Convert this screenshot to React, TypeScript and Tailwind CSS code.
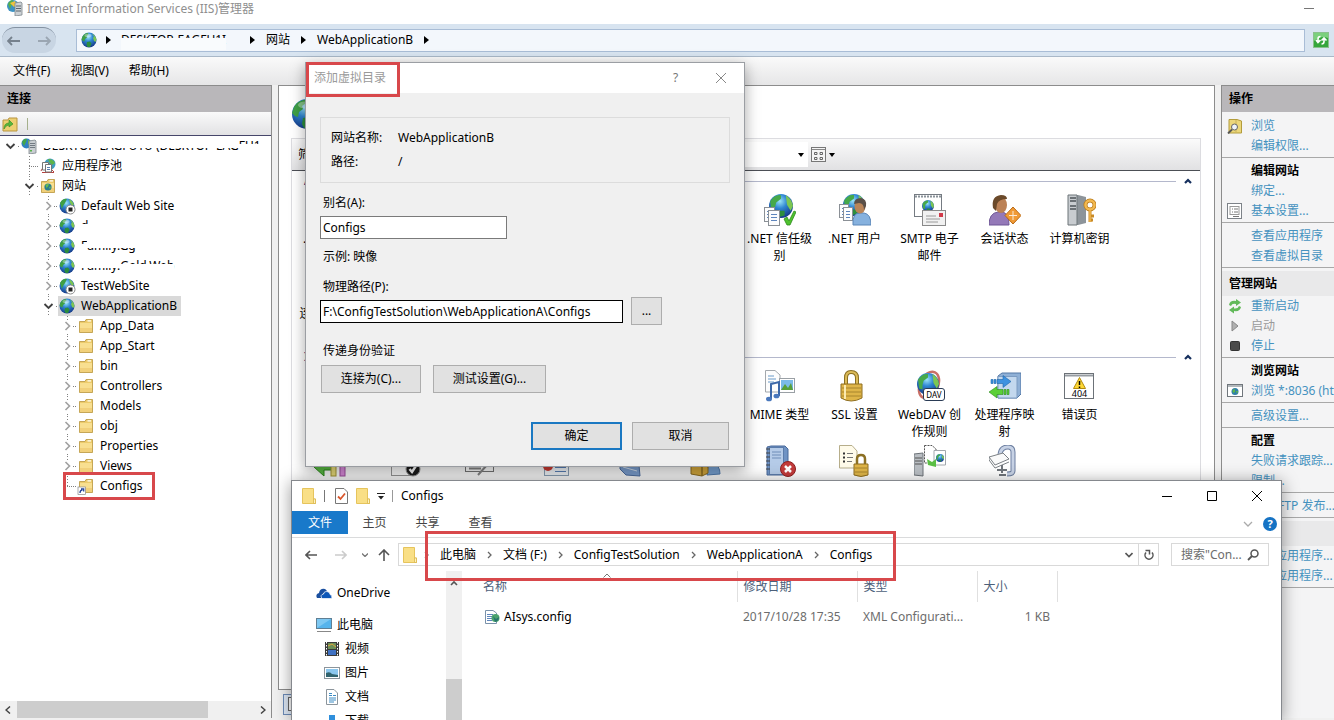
import React from "react";

type P = { className?: string };

/* ---------- small drawings ---------- */

function Globe({ className = "size-4" }: P) {
  return (
    <svg viewBox="0 0 32 32" className={"shrink-0 " + className} aria-hidden="true">
      <defs>
        <radialGradient id="sea" cx="0.45" cy="0.3" r="0.75">
          <stop offset="0" stopColor="#9be4f7" />
          <stop offset="0.4" stopColor="#2f86d2" />
          <stop offset="1" stopColor="#12307f" />
        </radialGradient>
      </defs>
      <circle cx="16" cy="16" r="15" fill="url(#sea)" />
      <path d="M3 9 C6 4 10 2 14 2 L15 5 L11 8 L12 11 L8 14 L7 19 L4 18 L1 15Z" fill="#3f9f45" />
      <path d="M22 3 C27 6 30 10 31 15 L29 20 L26 18 L24 12 L26 9Z" fill="#7cc653" />
      <path d="M12 20 L18 19 L21 23 L18 30 L13 30 L11 26Z" fill="#2c8e3c" />
      <ellipse cx="14" cy="7" rx="7" ry="3.5" fill="#fff" opacity="0.35" />
    </svg>
  );
}

function StoppedGlobe() {
  return (
    <svg viewBox="0 0 16 16" className="size-4 shrink-0 overflow-visible" aria-hidden="true">
      <circle cx="8" cy="8" r="7.5" fill="url(#sea)" />
      <path d="M1 5 Q4 0 8 1 L6 5 L4 8 L3 11Z" fill="#3f9f45" />
      <path d="M10 1 Q14 3 15 7 L13 8 L11 5Z" fill="#7cc653" />
      <circle cx="11.5" cy="11.5" r="4.5" fill="#fff" stroke="#888" />
      <rect x="9.5" y="9.5" width="4" height="4" fill="#222" />
    </svg>
  );
}

function ServerGlobe() {
  return (
    <svg viewBox="0 0 16 16" className="size-4 shrink-0" aria-hidden="true">
      <circle cx="5.5" cy="5.5" r="5" fill="#2f80c4" />
      <path d="M1 4 Q3 0 6 1 L5 4 L3 8Z" fill="#45a648" />
      <path d="M7 2 L10 4 L9 7 L7 6Z" fill="#6cbf3e" />
      <path d="M8 3 L14 2 L15 3 V15 L8 16Z" fill="#c9ced2" stroke="#7d868c" strokeWidth="0.8" />
      <path d="M9 5.500H14 M9 7.500H14 M9 9.500H14" stroke="#5c666e" strokeWidth="0.8" />
      <rect x="9" y="12" width="2" height="1.500" fill="#59b34a" />
    </svg>
  );
}

function AppPool() {
  return (
    <svg viewBox="0 0 16 16" className="size-4 shrink-0" aria-hidden="true">
      <circle cx="10" cy="6" r="5.5" fill="#3f9dc0" />
      <path d="M8 1 Q13 1 15 5 L12 7 L9 4Z" fill="#5fb548" />
      <path d="M1 13 Q2 9 5 10 M2 14.500H14 M14 14 L11 11" stroke="#b5423f" fill="none" />
      <path d="M2.500 4.500H8.500V12H2.500Z" fill="#fff" stroke="#777" />
      <path d="M5.500 6.500H11.500V14H5.500Z" fill="#fff" stroke="#777" />
      <path d="M7 9.500H10 M7 11.500H10" stroke="#5c7fb0" />
    </svg>
  );
}

function Folder({ globe, link }: { globe?: boolean; link?: boolean }) {
  return (
    <svg viewBox="0 0 16 16" className="size-4 shrink-0 overflow-visible" aria-hidden="true">
      <path d="M1.500 3.500H7L8 1.500H14.500V14.500H1.500Z" fill="#eccb6b" stroke="#b9953e" strokeWidth="0.8" />
      <path d="M2 5H14V14H2Z" fill="#f8df90" />
      <path d="M2 10H14V14H2Z" fill="#f1d07a" />
      <rect x="9.500" y="2.300" width="3.500" height="1.200" fill="#fff" />
      {globe && (
        <g>
          <circle cx="8" cy="9" r="3.600" fill="#2c7d8f" />
          <path d="M5.500 7 Q7 5.500 9 6 L8 8.500 L6.500 10Z M9 9 L11 8.500 L10 11.500Z" fill="#69bd4a" />
        </g>
      )}
      {link && (
        <g>
          <rect x="0" y="9" width="7.500" height="7.500" fill="#fff" stroke="#888" strokeWidth="0.7" />
          <path d="M2 15 Q2 12 4.500 12 M3 10.800H5.700V13.500" fill="none" stroke="#26459b" strokeWidth="1.300" />
        </g>
      )}
    </svg>
  );
}

function PlainFolder() {
  return (
    <svg viewBox="0 0 14 16" className="h-4 w-[14px] shrink-0" aria-hidden="true">
      <path d="M0.500 0.500H11.500V11L13.500 11V15.500H0.500Z" fill="#f9df86" stroke="#e6c45c" />
      <path d="M11.500 11 H13.500 V15.500 H11.500Z" fill="#fff2c0" stroke="#d9b64c" strokeWidth="0.8" />
    </svg>
  );
}

function Branch({ state }: { state: "open" | "closed" | "mid" | "last" | "root" }) {
  return (
    <svg viewBox="0 0 20 20" className="h-5 w-5 shrink-0" aria-hidden="true" fill="none">
      {state !== "root" && (
        <path d={state === "last" ? "M10.500 0V10" : "M10.500 0V20"} stroke="#808080" strokeDasharray="1 2" />
      )}
      <path d="M10 10.500H20" stroke="#808080" strokeDasharray="1 1" />
      {(state === "open" || state === "root") && (
        <g>
          <rect x="4" y="5" width="13" height="10" fill="#fff" />
          <path d="M6.500 8L10.500 12L14.500 8" stroke="#404040" strokeWidth="1.800" />
        </g>
      )}
      {state === "closed" && (
        <g>
          <rect x="6" y="4" width="9" height="13" fill="#fff" />
          <path d="M8.500 6L12.500 10L8.500 14" stroke="#a0a0a0" strokeWidth="1.600" />
        </g>
      )}
    </svg>
  );
}

/* 32px feature drawings */

const Big = ({ children }: { children: React.ReactNode }) => (
  <svg viewBox="0 0 32 32" className="size-8 shrink-0" aria-hidden="true">
    {children}
  </svg>
);

const MiniGlobe = ({ x, y, r }: { x: number; y: number; r: number }) => (
  <g transform={`translate(${x} ${y}) scale(${r / 10})`}>
    <circle r="10" fill="url(#sea)" />
    <path d="M-9 -4 Q-5 -10 0 -9 L0 -6 L-4 -3 L-5 1 L-5 5 L-8 4Z" fill="#46a94a" />
    <path d="M4 -9 Q9 -6 10 0 L8 4 L5 -1Z" fill="#7cc653" />
    <path d="M-2 4 L3 4 L3 8 L-1 9Z" fill="#2c8e3c" />
  </g>
);

const Sheet = ({ x, y, w, h }: { x: number; y: number; w: number; h: number }) => (
  <g>
    <rect x={x + 0.5} y={y + 0.5} width={w} height={h} fill="#fdfdfd" stroke="#8b9096" />
    <path
      d={`M${x + 3} ${y + 4.5}h${w - 5} M${x + 3} ${y + 7.5}h${w - 5} M${x + 3} ${y + 10.5}h${w - 5}`}
      stroke="#5f86bd"
    />
  </g>
);

const TrustIcon = () => (
  <Big>
    <MiniGlobe x={17} y={12} r={12} />
    <Sheet x={0} y={13} w={10} h={14} />
    <Sheet x={4} y={16} w={11} h={15} />
    <path d="M20 25 L23 23 L25 27 L30 17 L32 18 L26 31 L23 31Z" fill="#4fc22f" stroke="#2c8a1b" strokeWidth="0.8" />
  </Big>
);
const UserIcon = () => (
  <Big>
    <MiniGlobe x={15} y={11} r={11} />
    <Sheet x={0} y={10} w={9} h={13} />
    <Sheet x={4} y={13} w={9} h={13} />
    <path d="M14 31 Q13 19 21 19 H25 Q32 20 32 31Z" fill="#86b1de" stroke="#5b86b8" />
    <ellipse cx="21" cy="12.500" rx="5.500" ry="7" fill="#b98559" />
    <path d="M15 10 Q15 4 22 4 Q28 5 27 12 L25 16 Q25 9 20 9Z" fill="#5a5048" />
  </Big>
);
const SmtpIcon = () => (
  <Big>
    <rect x="0.500" y="0.500" width="27" height="22" fill="#fff" stroke="#757b82" />
    <path d="M1 2.500H27" stroke="#8a9299" strokeWidth="2" strokeDasharray="2 1" />
    <MiniGlobe x={14} y={12} r={6} />
    <rect x="8.500" y="16.500" width="23" height="15" fill="#f1f1f1" stroke="#8a8a8a" />
    <path d="M12 22H22 M12 25H26 M12 28H24" stroke="#9a9a9a" />
    <rect x="25" y="19" width="4" height="4" fill="#d23a4a" />
  </Big>
);
const SessionIcon = () => (
  <Big>
    <path d="M0 31 Q0 19 9 18 H14 Q20 20 20 31Z" fill="#9479b8" stroke="#6f5796" />
    <ellipse cx="12" cy="11" rx="6" ry="8" fill="#bb8257" />
    <path d="M4 14 Q2 2 12 1 Q18 1 18 5 Q10 5 8 10 L7 17Z" fill="#6b4a2a" />
    <path d="M24 13 L32 21.500 L24 30 L16 21.500Z" fill="#f09a35" stroke="#b86a17" />
    <path d="M24 17V26 M20 21.500H28" stroke="#fff" opacity="0.8" />
  </Big>
);
const KeyIcon = () => (
  <Big>
    <path d="M4 1H14L22 3V29L14 31H4Z" fill="#8d949a" />
    <path d="M4 1H13V31H4Z" fill="#c8ccd0" stroke="#6d7479" />
    <path d="M6 4H12 M6 7H12 M6 12H12 M6 15H12" stroke="#4c5358" strokeWidth="1.500" />
    <circle cx="26" cy="11" r="4.500" fill="none" stroke="#b87b1c" strokeWidth="4" />
    <circle cx="26" cy="11" r="4.500" fill="none" stroke="#f3b950" strokeWidth="2.500" />
    <path d="M26 16V28 M26 22H30 M26 26H29" stroke="#c98a25" strokeWidth="3" />
    <path d="M26 16V28" stroke="#f3b950" strokeWidth="1.500" />
  </Big>
);
const MimeIcon = () => (
  <Big>
    <path d="M1.500 0.500H11L16 5V22H1.500Z" fill="#fdfdfd" stroke="#a3a8ad" />
    <path d="M4 6H10 M4 9H12 M4 12H10" stroke="#6a9bc9" />
    <rect x="15.500" y="8.500" width="15" height="14" fill="#fff" stroke="#9aa0a5" />
    <rect x="17" y="10" width="12" height="10" fill="#7bbbe8" />
    <path d="M17 20L21 14L24 18L27 13L29 20Z" fill="#58a03a" />
    <path d="M7 29V14L15 12V26" fill="none" stroke="#3c67a8" strokeWidth="2" />
    <ellipse cx="5" cy="29" rx="3" ry="2.300" fill="#4a78bd" />
    <ellipse cx="12.500" cy="26" rx="3" ry="2.300" fill="#4a78bd" />
  </Big>
);
const LockIcon = () => (
  <Big>
    <path d="M7 15V8Q7 2 12 2Q18 2 18 8V15" fill="none" stroke="#8a6f22" strokeWidth="4" />
    <path d="M7 15V8Q7 2 12 2Q18 2 18 8V15" fill="none" stroke="#dcbb58" strokeWidth="2" />
    <path d="M2 14H23V28Q12 34 2 28Z" fill="#dfb548" stroke="#8f6f21" />
    <path d="M3 18H22 M3 22H22 M3 26H22" stroke="#a8852d" />
    <path d="M6 15V29" stroke="#fbeab0" strokeWidth="2" />
  </Big>
);
const DavIcon = () => (
  <Big>
    <ellipse cx="15" cy="15" rx="9" ry="14" fill="none" stroke="#c96f66" strokeWidth="2.500" transform="rotate(25 15 15)" />
    <MiniGlobe x={14} y={14} r={11} />
    <rect x="9.500" y="18.500" width="21" height="12" rx="2.500" fill="#fff" stroke="#2a3b55" />
    <text x="20" y="28" fontSize="8" textAnchor="middle" fill="#000" className="font-[Noto_Sans,sans-serif]">
      DAV
    </text>
  </Big>
);
const HandlerIcon = () => (
  <Big>
    <path d="M9 6L13 3H32V24L28 28H9Z" fill="#8fb0d6" stroke="#5579a6" />
    <path d="M9 6.500H28V28H9Z" fill="#c3d8ee" stroke="#7c9cc2" />
    <path d="M8 9.500H14V5.500L22 11.500L14 17.500V13.500H8Z M5 9.500H7V13.500H5Z M2 9.500H4V13.500H2Z" fill="#3d92e0" stroke="#2064a8" strokeWidth="0.600" />
    <path d="M14 19.500H8V16.500L0 22L8 28V24.500H14Z M15 19.500H17V24.500H15Z M18 19.500H20V24.500H18Z" fill="#5bcf38" stroke="#2c8a1b" strokeWidth="0.600" />
  </Big>
);
const ErrorIcon = () => (
  <Big>
    <rect x="0.500" y="3.500" width="29" height="25" fill="#fff" stroke="#6c7278" />
    <path d="M1 5.500H29" stroke="#969ca2" strokeWidth="2" />
    <path d="M15.500 7.500L21.500 18.500H9.500Z" fill="#ffd834" stroke="#b08a10" />
    <path d="M15.500 11V15 M15.500 16.500V18" stroke="#000" strokeWidth="1.500" />
    <text x="15.500" y="27" fontSize="9" textAnchor="middle" className="font-[Noto_Sans,sans-serif]">
      404
    </text>
  </Big>
);
const LogIcon = () => (
  <Big>
    <path d="M3 2L7 1H21L24 4V30H3Z" fill="#6f93c4" stroke="#49699a" />
    <rect x="5.500" y="2.500" width="14" height="27" fill="#b5cbe8" stroke="#5b7cab" />
    <path d="M8 7H17 M8 10H17 M8 13H17" stroke="#6e8db8" />
    <path d="M2 4H6 M2 8H6 M2 12H6 M2 16H6 M2 20H6 M2 24H6" stroke="#444" />
    <circle cx="24" cy="24" r="7.500" fill="#c33b3b" stroke="#8e1f1f" />
    <path d="M21 21L27 27 M27 21L21 27" stroke="#fff" strokeWidth="2.500" />
  </Big>
);
const RestrictIcon = () => (
  <Big>
    <path d="M0.500 0.500H13L18 6V23H0.500Z" fill="#fffbea" stroke="#b7ae8b" />
    <path d="M4 8.500H6 M4 12.500H6 M4 16.500H6" stroke="#333" strokeWidth="2" />
    <path d="M8 8.500H14 M8 12.500H14 M8 16.500H13" stroke="#777" />
    <path d="M18 20V14Q18 10 22 10Q26 10 26 14V20" fill="none" stroke="#8c7024" strokeWidth="2.500" />
    <path d="M15 19H29V30Q22 33 15 30Z" fill="#dfb548" stroke="#8f6f21" />
    <path d="M16 23H28 M16 27H28" stroke="#a8852d" />
  </Big>
);
const OutputIcon = () => (
  <Big>
    <path d="M0 9L9 8V31L0 30Z" fill="#b9bec3" stroke="#6c7278" />
    <path d="M1 13H8 M1 16H8 M1 19H8" stroke="#555" />
    <path d="M10.500 0.500H18L22 4V18H10.500Z" fill="#fff" stroke="#555" strokeDasharray="2 1" />
    <path d="M20 5.500H31.500V20H20Z" fill="#fff" stroke="#a3a8ad" />
    <MiniGlobe x={26} y={13} r={4} />
    <path d="M13 14L18 17L22 14V22L14 20Z" fill="#5bbf45" />
  </Big>
);
const ClampIcon = () => (
  <Big>
    <path d="M11 9Q12 2 19 2Q24 2 24 7V26Q24 29 18 29" fill="none" stroke="#6d7fa0" strokeWidth="5" />
    <path d="M11 9Q12 2 19 2Q24 2 24 7V26Q24 29 18 29" fill="none" stroke="#c7d2e5" strokeWidth="3" />
    <path d="M0 12L14 8L20 14L6 20Z" fill="#fafafa" stroke="#7b8085" />
    <path d="M0 15L6 23L20 17 M0 12V16" fill="none" stroke="#7b8085" />
    <path d="M13 20V28 M8 25H18 M10 30H17" stroke="#70757b" strokeWidth="2" />
  </Big>
);
const ArrowBarsIcon = () => (
  <Big>
    <path d="M0 22L10 13V19H18V25H10V31Z" fill="#5bbf45" stroke="#2c8a1b" />
    <rect x="17" y="10" width="5" height="21" fill="#ecdf7c" stroke="#a79a35" />
    <rect x="26" y="10" width="5" height="21" fill="#dd8ede" stroke="#a04fa1" />
  </Big>
);
const AuthIcon = () => (
  <Big>
    <rect x="2.500" y="8.500" width="21" height="22" fill="#fff" stroke="#999" />
    <circle cx="24" cy="24" r="7" fill="#1b1b1b" stroke="#999" />
    <path d="M20.500 24L23 27L27.500 20" fill="none" stroke="#fff" strokeWidth="2.500" />
  </Big>
);
const BrowseIcon = () => (
  <Big>
    <rect x="1.500" y="12.500" width="28" height="14" fill="#fff" stroke="#777" />
    <path d="M5 23.500H17 M14 30L23 20" stroke="#888" strokeWidth="2" />
  </Big>
);
const DocIcon = () => (
  <Big>
    <rect x="5.500" y="6.500" width="24" height="24" fill="#f7fbff" stroke="#8fa4ba" />
    <circle cx="9" cy="21" r="5" fill="#cf3b33" />
    <path d="M16 22.500H27 M16 26.500H27" stroke="#5a83bb" />
  </Big>
);
const BookIcon = () => (
  <Big>
    <path d="M6 8L24 9L26 31L12 30L6 24Z" fill="#7fa3d4" stroke="#4d6fa3" />
    <path d="M9 22L23 26" stroke="#d7e4f4" />
  </Big>
);
const GroupIcon = () => (
  <Big>
    <path d="M18 30Q17 20 24 19Q31 20 31 29Z" fill="#7ba6d8" stroke="#527eb2" />
    <path d="M2 18L13 20V31L2 29Z M13 20L19 22V28L13 31Z" fill="#d9ac3e" stroke="#8f6f21" />
  </Big>
);

/* ---------- shared pieces ---------- */

function Feature({ icon, label, place = "" }: { icon: React.ReactNode; label: string; place?: string }) {
  return (
    <div className={"flex h-[75px] flex-col items-center gap-1 text-center leading-[17px] " + place}>
      {icon}
      <span className="w-[68px]">{label}</span>
    </div>
  );
}

/* Text of which a painted-over strip hides the upper or the lower part. */
function Masked({ text, show, tone = "bg-white" }: { text: string; show: "top" | "bottom"; tone?: string }) {
  return (
    <span className="relative leading-5 whitespace-pre">
      {text}
      <span className={"absolute inset-x-0 " + tone + (show === "top" ? " top-2 bottom-0" : " top-0 h-3")} />
    </span>
  );
}

const indents = ["pl-0", "pl-[19px]", "pl-[38px]", "pl-[57px]"];

function Node(p: {
  level: number;
  state: "open" | "closed" | "mid" | "last" | "root";
  icon: React.ReactNode;
  label: React.ReactNode;
  selected?: boolean;
  marked?: boolean;
}) {
  return (
    <li className={"relative flex h-5 items-center " + indents[p.level]}>
      <Branch state={p.state} />
      <span
        className={
          "flex h-5 items-center gap-[6px] pr-1 pl-px whitespace-nowrap " + (p.selected ? "bg-[#d9d9d9]" : "")
        }
      >
        {p.icon}
        <span className="flex">{p.label}</span>
      </span>
      {p.marked && <span className="absolute -top-1 left-[63px] h-7 w-[92px] border-3 border-[#d8484b]" />}
    </li>
  );
}

const Caret = () => (
  <svg viewBox="0 0 5 8" className="h-2 w-[5px] shrink-0" aria-hidden="true">
    <path d="M0 0L5 4L0 8Z" fill="#000" />
  </svg>
);
const Down = () => (
  <svg viewBox="0 0 6 4" className="h-1 w-[6px] shrink-0" aria-hidden="true">
    <path d="M0 0H6L3 4Z" fill="#000" />
  </svg>
);
const Crumb = () => (
  <svg viewBox="0 0 5 8" className="h-2 w-[5px] shrink-0" fill="none" aria-hidden="true">
    <path d="M1 1L4 4L1 7" stroke="#666" strokeWidth="1.300" />
  </svg>
);

function GroupHead({ label }: { label: string }) {
  return (
    <div className="flex h-[18px] items-center gap-2 pr-2 pl-3">
      <span className="font-bold text-[#1e3287]">{label}</span>
      <span className="h-px flex-1 bg-[#b4b8cc]" />
      <svg viewBox="0 0 8 6" className="h-[6px] w-2" fill="none" aria-hidden="true">
        <path d="M1 5L4 2L7 5" stroke="#16305e" strokeWidth="2.200" />
      </svg>
    </div>
  );
}

function Action({ icon, label, off }: { icon?: React.ReactNode; label: string; off?: boolean }) {
  return (
    <li className="flex h-5 items-center pl-[5px] whitespace-nowrap">
      <span className="flex w-6 shrink-0">{icon}</span>
      {off ? <span className="text-[#9a9a9a]">{label}</span> : <a href="#" className="text-[#4592bf]">{label}</a>}
    </li>
  );
}
const ActionHead = ({ label }: { label: string }) => (
  <li className="flex h-5 items-center pl-[29px] font-bold whitespace-nowrap">{label}</li>
);
const Rule = () => (
  <li className="flex h-[5px] items-start pt-px" aria-hidden="true">
    <span className="h-px w-full bg-[#a8a8a8]" />
  </li>
);
const Band = ({ label }: { label: string }) => (
  <li className="flex h-[25px] items-center bg-[#e9e9ea] pl-[7px] font-bold">{label}</li>
);

const dlgBtn = "flex h-7 items-center justify-center border border-[#adadad] bg-[#e1e1e1]";

/* ---------- the windows ---------- */

function Dialog() {
  return (
    <section
      role="dialog"
      aria-label="添加虚拟目录"
      className="absolute top-[62px] left-[305px] w-[440px] border border-[#9b9ea3] bg-[#f0f0f0] shadow-[0_4px_14px_rgba(0,0,0,0.35)]"
    >
      <header className="flex h-[30px] items-center bg-white pr-px pl-2">
        <span className="flex-1 text-[#9a9a9a]">添加虚拟目录</span>
        <button aria-label="帮助" className="flex w-[45px] justify-center text-[#777]">?</button>
        <button aria-label="关闭" className="flex w-[45px] justify-center">
          <svg viewBox="0 0 10 10" className="size-[10px]" aria-hidden="true">
            <path d="M0 0L10 10M10 0L0 10" stroke="#888" />
          </svg>
        </button>
      </header>
      <span className="absolute top-[-1px] left-0 h-[35px] w-[94px] border-3 border-[#d8484b]" />
      <form className="flex flex-col px-[14px] pt-6 pb-4" onSubmit={(e) => e.preventDefault()}>
        <dl className="grid h-[66px] grid-cols-[67px_1fr] content-center gap-y-1 border border-[#dcdcdc] pl-[10px] leading-5">
          <dt>网站名称:</dt>
          <dd>WebApplicationB</dd>
          <dt>路径:</dt>
          <dd>/</dd>
        </dl>
        <label htmlFor="alias" className="mt-[10px] pl-[3px] leading-5">别名(A):</label>
        <input
          id="alias"
          defaultValue="Configs"
          className="mt-[3px] h-[23px] w-[187px] border border-[#7a7a7a] bg-white px-[2px] outline-none"
        />
        <p className="mt-2 pl-[3px] leading-5">示例: 映像</p>
        <label htmlFor="path" className="mt-[10px] pl-[3px] leading-5">物理路径(P):</label>
        <div className="flex items-center gap-2">
          <input
            id="path"
            defaultValue="F:\ConfigTestSolution\WebApplicationA\Configs"
            className="h-[23px] w-[303px] border border-black bg-white px-[2px] outline-none"
          />
          <button type="button" className={dlgBtn + " w-[31px]"}>...</button>
        </div>
        <p className="mt-4 pl-[3px] leading-5">传递身份验证</p>
        <div className="mt-1 flex gap-3 pl-px">
          <button type="button" className={dlgBtn + " w-[100px]"}>连接为(C)...</button>
          <button type="button" className={dlgBtn + " w-[113px]"}>测试设置(G)...</button>
        </div>
        <div className="mt-[29px] flex justify-end gap-[10px] pr-px">
          <button className="flex h-7 w-[91px] items-center justify-center border-2 border-[#1a78c2] bg-[#e1e1e1]">确定</button>
          <button type="button" className={dlgBtn + " w-[97px]"}>取消</button>
        </div>
      </form>
    </section>
  );
}

function Explorer() {
  const tree = [
    {
      name: "视频",
      icon: (
        <>
          <rect x="1" y="1" width="14" height="14" fill="#3a3a3a" />
          <rect x="4" y="2" width="8" height="6" fill="#6c8f58" />
          <rect x="4" y="9" width="8" height="5" fill="#3f72c4" />
          <path d="M2.500 1V15M13.500 1V15" stroke="#fff" strokeDasharray="1.500 1.500" />
          <path d="M4 5L8 3L12 6" stroke="#e0a63c" fill="none" />
        </>
      ),
    },
    {
      name: "图片",
      icon: (
        <>
          <rect x="0.500" y="2.500" width="15" height="11" fill="#fff" stroke="#8c959c" />
          <rect x="2" y="4" width="12" height="8" fill="#8cc7ee" />
          <path d="M2 12V8Q6 6 8 9L14 10V12Z" fill="#32646f" />
        </>
      ),
    },
    {
      name: "文档",
      icon: (
        <>
          <path d="M2.500 0.500H10L13.500 4V15.500H2.500Z" fill="#fff" stroke="#8c959c" />
          <path d="M5 4.500H8M5 6.500H8M9 6.500H12M5 9H12M5 11H12M5 13H10" stroke="#3c8cc4" />
        </>
      ),
    },
    { name: "下载", icon: <path d="M5 2H11V9H14L8 15L2 9H5Z" fill="#2f8fdc" /> },
  ];
  return (
    <section
      aria-label="Configs"
      className="absolute top-[480px] right-[52px] bottom-0 left-[291px] flex flex-col overflow-hidden border border-b-0 border-[#85888d] bg-white shadow-[0_2px_16px_rgba(0,0,0,0.4)]"
    >
      <header className="flex h-[30px] shrink-0 items-center pr-[2px] pl-[10px]">
        <PlainFolder />
        <span className="mx-2 h-3 w-px bg-[#777]" />
        <svg viewBox="0 0 13 16" className="mr-2 ml-[2px] h-4 w-[13px]" aria-hidden="true">
          <path d="M0.500 0.500H9L12.500 4V15.500H0.500Z" fill="#fff" stroke="#777" />
          <path d="M3 8.500L5.500 11L10 5.500" fill="none" stroke="#d9562c" strokeWidth="1.800" />
        </svg>
        <PlainFolder />
        <svg viewBox="0 0 8 7" className="mx-[7px] h-[7px] w-2" aria-hidden="true">
          <path d="M0 0.500H8" stroke="#222" />
          <path d="M1 3H7L4 6.500Z" fill="#222" />
        </svg>
        <span className="mr-2 h-3 w-px bg-[#999]" />
        <h2 className="flex-1">Configs</h2>
        <button aria-label="最小化" className="flex w-[45px] justify-center">
          <svg viewBox="0 0 10 10" className="size-[10px]" aria-hidden="true"><path d="M0 5.500H10" stroke="#000" /></svg>
        </button>
        <button aria-label="最大化" className="flex w-[45px] justify-center">
          <svg viewBox="0 0 10 10" className="size-[10px]" aria-hidden="true"><path d="M0.500 0.500H9.500V9.500H0.500Z" fill="none" stroke="#000" /></svg>
        </button>
        <button aria-label="关闭" className="flex w-[45px] justify-center">
          <svg viewBox="0 0 10 10" className="size-[10px]" aria-hidden="true"><path d="M0 0L10 10M10 0L0 10" stroke="#000" /></svg>
        </button>
      </header>
      <nav className="flex h-[27px] shrink-0 items-start border-b border-[#dadbdc] pr-1 text-[#444]">
        <button className="h-[23px] w-14 bg-[#1979ca] text-white">文件</button>
        <button className="h-6 w-[53px]">主页</button>
        <button className="h-6 w-[53px]">共享</button>
        <button className="h-6 w-[53px]">查看</button>
        <span className="flex-1" />
        <span className="flex h-[26px] items-center gap-[10px]">
          <svg viewBox="0 0 10 6" className="h-[6px] w-[10px]" fill="none" aria-hidden="true">
            <path d="M1 1L5 5L9 1" stroke="#aaa" strokeWidth="1.300" />
          </svg>
          <button aria-label="帮助" className="flex size-[14px] items-center justify-center rounded-full bg-[#1673c4] text-[11px] font-bold text-white">?</button>
        </span>
      </nav>
      <div className="flex h-[33px] shrink-0 items-center pr-3">
        <div className="flex w-[106px] items-center justify-between pr-2 pl-[13px]">
          <button aria-label="后退">
            <svg viewBox="0 0 12 10" className="h-[10px] w-3" fill="none" aria-hidden="true"><path d="M12 5H1M5 1L1 5L5 9" stroke="#555" strokeWidth="1.600" /></svg>
          </button>
          <button aria-label="前进" className="ml-2">
            <svg viewBox="0 0 12 10" className="h-[10px] w-3" fill="none" aria-hidden="true"><path d="M0 5H11M7 1L11 5L7 9" stroke="#ccc" strokeWidth="1.600" /></svg>
          </button>
          <svg viewBox="0 0 6 4" className="ml-1 h-1 w-[6px]" fill="none" aria-hidden="true"><path d="M0 0.500L3 3.500L6 0.500" stroke="#777" strokeWidth="1.300" /></svg>
          <button aria-label="上移">
            <svg viewBox="0 0 12 12" className="size-3" fill="none" aria-hidden="true"><path d="M6 12V1M1 6L6 1L11 6" stroke="#555" strokeWidth="1.600" /></svg>
          </button>
        </div>
        <div className="flex h-[23px] flex-1 items-center border border-[#d9d9d9] pl-1 whitespace-nowrap">
          <PlainFolder />
          <span className="flex items-center gap-[11px] pl-[7px]">
            <Crumb />
            <span>此电脑</span>
            <Crumb />
            <span>文档 (F:)</span>
            <Crumb />
            <span>ConfigTestSolution</span>
            <Crumb />
            <span>WebApplicationA</span>
            <Crumb />
            <span>Configs</span>
          </span>
          <span className="flex-1" />
          <svg viewBox="0 0 8 6" className="mr-[5px] h-[6px] w-2" fill="none" aria-hidden="true"><path d="M0.500 1L4 4.500L7.500 1" stroke="#555" strokeWidth="1.600" /></svg>
          <button aria-label="刷新" className="flex h-[21px] w-5 items-center justify-center border-l border-[#d9d9d9]">
            <svg viewBox="0 0 12 12" className="size-3" fill="none" aria-hidden="true">
              <path d="M3 3.500A4 4 0 1 0 9 3.500" stroke="#555" strokeWidth="1.500" />
              <path d="M2.500 1.500H6.500V5.500" stroke="#555" strokeWidth="1.500" />
            </svg>
          </button>
        </div>
        <label className="ml-3 flex h-[23px] w-[98px] items-center border border-[#d9d9d9] pr-1">
          <input placeholder='搜索"Con...' aria-label="搜索" className="w-[75px] pl-[9px] outline-none placeholder:text-[#6d6d6d]" />
          <svg viewBox="0 0 12 12" className="size-3" fill="none" aria-hidden="true">
            <circle cx="7.500" cy="4.500" r="3.500" stroke="#555" strokeWidth="1.500" />
            <path d="M5 7L1 11" stroke="#555" strokeWidth="1.800" />
          </svg>
        </label>
      </div>
      <div className="flex min-h-0 flex-1">
        <ul className="w-[154px] shrink-0 overflow-hidden pt-[10px]">
          <li className="flex h-6 items-center gap-[5px] pl-6">
            <svg viewBox="0 0 16 16" className="size-4" aria-hidden="true">
              <path d="M1 13Q-1 9 3 8Q4 3 9 4Q11 5 11 7Q6 7 6 13Z" fill="#1a4f9f" />
              <path d="M6 13.500Q3.500 10 7.500 9Q8 6 11 6.500Q14 7 14 9.500Q16.500 10 15.800 13.500Z" fill="#0d57b8" stroke="#fff" strokeWidth="0.700" />
            </svg>
            OneDrive
          </li>
          <li className="mt-2 flex h-6 items-center gap-[5px] pl-6">
            <svg viewBox="0 0 16 16" className="size-4" aria-hidden="true">
              <rect x="0.500" y="1.500" width="15" height="10" fill="#56b4ec" stroke="#5f7f94" />
              <path d="M1 2H15L1 11Z" fill="#9ad6f7" opacity="0.600" />
              <path d="M1 14.500H15" stroke="#888" />
            </svg>
            此电脑
          </li>
          {tree.map((t) => (
            <li key={t.name} className="flex h-6 items-center gap-[5px] pl-8">
              <svg viewBox="0 0 16 16" className="size-4" fill="none" aria-hidden="true">{t.icon}</svg>
              {t.name}
            </li>
          ))}
        </ul>
        <div className="flex w-4 shrink-0 flex-col bg-[#f0f0f0]">
          <svg viewBox="0 0 16 16" className="mt-[2px] size-4" fill="none" aria-hidden="true"><path d="M5 12L8 9L11 12" stroke="#555" strokeWidth="1.600" /></svg>
          <span className="h-[90px]" />
          <span className="flex-1 bg-[#cdcdcd]" />
        </div>
        <div className="relative flex-1">
          <table className="ml-2 w-[587px] table-fixed border-collapse text-left">
            <thead>
              <tr className="h-[31px] text-[#4c607a]">
                <th className="w-[267px] border-r border-[#e0e0e0] pl-[13px] font-normal">名称</th>
                <th className="w-[120px] border-r border-[#e0e0e0] pl-[6px] font-normal">修改日期</th>
                <th className="w-[120px] border-r border-[#e0e0e0] pl-[6px] font-normal">类型</th>
                <th className="w-20 border-r border-[#e0e0e0] pl-[6px] font-normal">大小</th>
              </tr>
            </thead>
            <tbody>
              <tr className="h-[30px] text-[#6d6d6d]">
                <td className="pl-[13px] text-black">
                  <span className="flex items-center gap-1 pl-px">
                    <svg viewBox="0 0 16 16" className="size-4" aria-hidden="true">
                      <path d="M1.500 1.500H9L12.500 4V14.500H1.500Z" fill="#fff" stroke="#7a92ab" />
                      <path d="M3 5.500H9M3 7.500H9M3 9.500H8M3 11.500H8" stroke="#5f86bd" />
                      <circle cx="11.500" cy="9" r="4" fill="#4aa36d" />
                      <path d="M9 7L12 10L15 8Q15 12 11 13Z" fill="#27746e" />
                    </svg>
                    AIsys.config
                  </span>
                </td>
                <td className="pl-[6px] whitespace-nowrap">2017/10/28 17:35</td>
                <td className="pl-[6px] whitespace-nowrap">XML Configurati...</td>
                <td className="pr-[7px] text-right">1 KB</td>
              </tr>
            </tbody>
          </table>
          <svg viewBox="0 0 8 5" className="absolute top-[2px] left-[141px] h-[5px] w-2" fill="none" aria-hidden="true">
            <path d="M0.500 4.500L4 1L7.500 4.500" stroke="#777" />
          </svg>
        </div>
      </div>
      <span className="pointer-events-none absolute top-[50px] left-[133px] h-[50px] w-[471px] border-3 border-[#d8484b]" />
    </section>
  );
}

const folders = ["App_Data", "App_Start", "bin", "Controllers", "Models", "obj", "Properties", "Views"];

function Connections() {
  return (
    <aside className="flex w-[272px] shrink-0 flex-col border-t border-r border-[#8c8c8c] bg-white">
      <h2 className="flex h-[26px] shrink-0 items-center bg-[#b9b7ba] pl-[7px] font-bold">连接</h2>
      <div className="flex h-6 shrink-0 items-center gap-[9px] border-b border-[#46466a] bg-linear-to-b from-[#fafafa] to-[#e2e2e4] pl-[2px]">
        <svg viewBox="0 0 16 16" className="size-4" aria-hidden="true">
          <path d="M1 4H6L7 2H15V15H1Z" fill="#edcf72" stroke="#b9953e" />
          <path d="M2 13Q2 7 7 7V4L11 8L7 11V9Q4 9 2 13Z" fill="#57b83d" stroke="#2f8a24" strokeWidth="0.600" />
        </svg>
        <span className="h-3 w-px bg-[#a5b08c]" />
      </div>
      <ul className="min-h-0 flex-1 overflow-hidden">
        <Node
          level={0}
          state="root"
          icon={<ServerGlobe />}
          label={
            <>
              <Masked text="DESKTOP-EAGFU1U (DESKTOP-EAG" show="bottom" />
              <Masked text="FU1" show="top" />
            </>
          }
        />
        <Node level={1} state="mid" icon={<AppPool />} label="应用程序池" />
        <Node level={1} state="open" icon={<Folder globe />} label="网站" />
        <Node level={2} state="closed" icon={<StoppedGlobe />} label="Default Web Site" />
        <Node level={2} state="closed" icon={<Globe />} label={<Masked text="d" show="top" />} />
        <Node
          level={2}
          state="closed"
          icon={<Globe />}
          label={
            <>
              <Masked text="F" show="top" />
              <Masked text="amily.Gg" show="bottom" />
            </>
          }
        />
        <Node
          level={2}
          state="closed"
          icon={<Globe />}
          label={
            <>
              <Masked text="Family." show="bottom" />
              <Masked text="Gold.Web" show="top" />
            </>
          }
        />
        <Node level={2} state="closed" icon={<StoppedGlobe />} label="TestWebSite" />
        <Node level={2} state="open" icon={<Globe />} label="WebApplicationB" selected />
        {folders.map((f) => (
          <Node key={f} level={3} state="closed" icon={<Folder />} label={f} />
        ))}
        <Node level={3} state="last" icon={<Folder link />} label="Configs" marked />
      </ul>
      <div className="flex h-[17px] shrink-0 items-center bg-[#f0f0f0] px-[5px]">
        <svg viewBox="0 0 6 8" className="h-2 w-[6px]" fill="none" aria-hidden="true"><path d="M5 0.500L1 4L5 7.500" stroke="#444" strokeWidth="1.500" /></svg>
        <span className="ml-[6px] h-[17px] w-[191px] bg-[#cdcdcd]" />
        <span className="flex-1" />
        <svg viewBox="0 0 6 8" className="h-2 w-[6px]" fill="none" aria-hidden="true"><path d="M1 0.500L5 4L1 7.500" stroke="#444" strokeWidth="1.500" /></svg>
      </div>
    </aside>
  );
}

function FeaturePane() {
  return (
    <main className="flex min-w-0 flex-1 flex-col">
      <div className="flex min-h-0 flex-1 flex-col overflow-hidden border border-[#8c8c8c] bg-white pr-[13px] pl-3">
        <div className="flex h-[52px] shrink-0 items-center pt-1">
          <Globe className="size-8" />
        </div>
        <div className="flex min-h-0 flex-1 flex-col border border-b-0 border-[#dcdce0]">
          <div className="flex h-8 shrink-0 items-center border-b border-[#4c4f55] bg-linear-to-b from-[#fbfbfb] to-[#e1e1e3] pl-[6px]">
            <label htmlFor="filter" className="pr-2">筛选:</label>
            <input id="filter" className="h-[25px] w-[465px] bg-white outline-none" />
            <span className="flex h-[25px] w-[10px] items-center bg-white"><Down /></span>
            <button aria-label="视图" className="ml-[3px] flex items-center gap-[3px]">
              <svg viewBox="0 0 15 15" className="size-[15px]" fill="none" aria-hidden="true">
                <rect x="0.500" y="0.500" width="14" height="14" fill="#f4f4f4" stroke="#777" />
                <path d="M1 2.500H14" stroke="#888" />
                <path d="M3.500 5.500H6V7.500H3.500Z M9 5.500H11.500V7.500H9Z M3.500 10.500H6V12.500H3.500Z M9 10.500H11.500V12.500H9Z" stroke="#666" />
              </svg>
              <Down />
            </button>
          </div>
          <div className="h-px shrink-0" />
          <GroupHead label="ASP.NET" />
          <div className="grid shrink-0 grid-cols-[repeat(11,75px)] py-1">
            <Feature icon={<TrustIcon />} label=".NET 编译" />
            <Feature icon={<TrustIcon />} label=".NET 信任级别" place="col-start-7" />
            <Feature icon={<UserIcon />} label=".NET 用户" />
            <Feature icon={<SmtpIcon />} label="SMTP 电子邮件" />
            <Feature icon={<SessionIcon />} label="会话状态" />
            <Feature icon={<KeyIcon />} label="计算机密钥" />
            <Feature icon={<KeyIcon />} label="连接字符串" place="col-start-1" />
          </div>
          <GroupHead label="IIS" />
          <div className="grid shrink-0 grid-cols-[repeat(11,75px)] pt-1">
            <Feature icon={<MimeIcon />} label="MIME 类型" place="col-start-7" />
            <Feature icon={<LockIcon />} label="SSL 设置" />
            <Feature icon={<DavIcon />} label="WebDAV 创作规则" />
            <Feature icon={<HandlerIcon />} label="处理程序映射" />
            <Feature icon={<ErrorIcon />} label="错误页" />
            <Feature icon={<ArrowBarsIcon />} label="" />
            <Feature icon={<AuthIcon />} label="" />
            <Feature icon={<BrowseIcon />} label="" />
            <Feature icon={<DocIcon />} label="" />
            <Feature icon={<BookIcon />} label="" />
            <Feature icon={<GroupIcon />} label="" />
            <Feature icon={<LogIcon />} label="" />
            <Feature icon={<RestrictIcon />} label="" />
            <Feature icon={<OutputIcon />} label="" />
            <Feature icon={<ClampIcon />} label="" />
          </div>
        </div>
      </div>
      <div className="flex h-7 shrink-0 items-center pl-[5px]">
        <span className="flex h-[21px] items-center border border-[#6d8cb8] bg-[#dfe9f6] px-1">
          <svg viewBox="0 0 14 14" className="size-[14px]" aria-hidden="true">
            <rect x="0.500" y="0.500" width="13" height="13" fill="#fff" stroke="#666" />
            <path d="M3 4.500H11M3 7.500H11M3 10.500H11" stroke="#888" />
          </svg>
        </span>
      </div>
    </main>
  );
}

function Actions() {
  return (
    <aside className="w-[113px] shrink-0 overflow-hidden border-t border-l border-[#8c8c8c] bg-[#f4f4f5]">
      <h2 className="flex h-[26px] items-center bg-[#b9b7ba] pl-[7px] font-bold">操作</h2>
      <ul className="pt-1">
        <Action
          label="浏览"
          icon={
            <svg viewBox="0 0 16 16" className="size-4" fill="none" aria-hidden="true">
              <path d="M2 1.500H10L14.500 3V15H2Z" fill="#ecd77a" stroke="#b39c3c" />
              <path d="M9 2V14" stroke="#c9b25a" />
              <circle cx="7.500" cy="9" r="3" fill="#eef4fa" stroke="#666" />
              <path d="M5 11.500L1 15.500" stroke="#555" strokeWidth="1.800" />
            </svg>
          }
        />
        <Action label="编辑权限..." />
        <Rule />
        <ActionHead label="编辑网站" />
        <Action label="绑定..." />
        <Action
          label="基本设置..."
          icon={
            <svg viewBox="0 0 16 16" className="size-4" fill="none" aria-hidden="true">
              <rect x="0.500" y="0.500" width="14" height="15" fill="#fff" stroke="#7d8288" />
              <rect x="3" y="3.500" width="9" height="8" stroke="#999" />
              <path d="M5 6H6M7 6H11M5 9H6M7 9H11M6 13.500H12" stroke="#777" />
            </svg>
          }
        />
        <Rule />
        <Action label="查看应用程序" />
        <Action label="查看虚拟目录" />
        <Rule />
        <Band label="管理网站" />
        <Action
          label="重新启动"
          icon={
            <svg viewBox="0 0 16 16" className="size-4" aria-hidden="true">
              <path d="M2 7Q3 2 9 3L9 1L14 4.500L9 8V6Q5 5 4 8Z" fill="#62b95a" />
              <path d="M14 9Q13 14 7 13V15.500L2 12L7 8.500V10.500Q11 11 12 8Z" fill="#62b95a" />
            </svg>
          }
        />
        <Action
          off
          label="启动"
          icon={<svg viewBox="0 0 16 16" className="size-4" aria-hidden="true"><path d="M5 3L11 8L5 13Z" fill="#b0b0b0" stroke="#888" /></svg>}
        />
        <Action
          label="停止"
          icon={<svg viewBox="0 0 16 16" className="size-4" aria-hidden="true"><rect x="3.500" y="3.500" width="9" height="9" rx="1" fill="#4a4a4a" stroke="#333" /></svg>}
        />
        <Rule />
        <ActionHead label="浏览网站" />
        <Action
          label="浏览 *:8036 (http)"
          icon={
            <svg viewBox="0 0 16 16" className="size-4" aria-hidden="true">
              <rect x="0.500" y="1.500" width="15" height="12" fill="#fff" stroke="#70767c" />
              <path d="M1 3H15" stroke="#9aa0a6" strokeWidth="1.500" />
              <circle cx="8" cy="8.500" r="3.500" fill="#2f7fa8" />
              <path d="M5.500 7L8 6L8 9L6 10Z M9 8L11 8L10 11Z" fill="#5db64a" />
            </svg>
          }
        />
        <Rule />
        <Action label="高级设置..." />
        <Rule />
        <ActionHead label="配置" />
        <Action label="失败请求跟踪..." />
        <Action label="限制..." />
        <Rule />
        <Action label="添加 FTP 发布..." />
        <Rule />
        <Band label="" />
        <Action label="添加应用程序..." />
        <Action label="查看应用程序..." />
        <Rule />
      </ul>
    </aside>
  );
}

export default function App() {
  return (
    <div className="relative flex h-screen flex-col overflow-hidden bg-[#f0f0f0] font-['Noto_Sans','Noto_Sans_CJK_SC',sans-serif] text-[12px] text-black">
      <header className="flex h-6 shrink-0 items-start gap-1 bg-white pr-5 pl-[7px]">
        <svg viewBox="0 0 16 16" className="size-4" aria-hidden="true">
          <circle cx="6" cy="6" r="6" fill="#3e93c4" />
          <path d="M1 4Q3 0 6 0L5 4L3 9Z" fill="#57b148" />
          <path d="M3 3L8 1L10 5L7 7Z" fill="#f0c23e" />
          <path d="M8 3L14 2L15 3V15L8 16Z" fill="#cdd2d6" stroke="#7d868c" strokeWidth="0.800" />
          <path d="M9 6H14M9 8.500H14M9 11H14" stroke="#5c666e" />
        </svg>
        <h1 className="flex-1 leading-[17px] text-[#8f8f8f]">Internet Information Services (IIS)管理器</h1>
        <span className="mt-2 h-px w-[10px] bg-[#777]" />
      </header>
      <div className="flex h-[33px] shrink-0 items-center border-b border-[#a9b8c8] bg-[#d8e4f0] pr-[5px]">
        <div className="ml-[2px] flex h-[26px] w-[54px] items-center justify-between rounded-[13px] border-t border-[#8492a2] bg-[#c8d5e3] px-[5px]">
          <button aria-label="后退">
            <svg viewBox="0 0 13 10" className="h-[10px] w-[13px]" fill="none" aria-hidden="true"><path d="M13 5H1M5 1L1 5L5 9" stroke="#76818d" strokeWidth="1.800" /></svg>
          </button>
          <button aria-label="前进">
            <svg viewBox="0 0 13 10" className="h-[10px] w-[13px]" fill="none" aria-hidden="true"><path d="M0 5H12M8 1L12 5L8 9" stroke="#9ba6b2" strokeWidth="1.800" /></svg>
          </button>
        </div>
        <div className="ml-5 flex h-[23px] flex-1 items-center border border-[#a9bdd6] bg-[#f3f7fc] pl-1">
          <Globe />
          <span className="flex items-center pl-[9px]"><Caret /></span>
          <span className="ml-[10px] flex w-[112px] items-center">
            <Masked text="DESKTOP-EAGFU1I" show="top" tone="bg-[#f9fbfd]" />
          </span>
          <span className="flex items-center gap-[11px] pl-[17px] whitespace-nowrap">
            <Caret />
            <span>网站</span>
            <Caret />
            <span>WebApplicationB</span>
            <Caret />
          </span>
        </div>
        <button aria-label="刷新" className="ml-2">
          <svg viewBox="0 0 16 16" className="size-4" fill="none" aria-hidden="true">
            <rect x="0.500" y="0.500" width="15" height="15" fill="#35a63c" stroke="#8ac08d" />
            <path d="M1 1H15V6Q8 3 1 9Z" fill="#7bd07d" />
            <path d="M3 8L5 10.500L7.500 8M5 10V7Q5 4.500 7.500 4.500M8.500 8.500L11 6L13.500 8.500M11 6.500V9.500Q11 12 8.500 12" stroke="#fff" strokeWidth="1.600" />
          </svg>
        </button>
      </div>
      <nav className="flex h-7 shrink-0 items-center gap-5 bg-linear-to-b from-[#fafafa] to-[#e6e6e7] pl-[13px]">
        <button>文件(F)</button>
        <button>视图(V)</button>
        <button>帮助(H)</button>
      </nav>
      <div className="flex min-h-0 flex-1 gap-[6px] pb-[2px]">
        <Connections />
        <FeaturePane />
        <Actions />
      </div>
      <Dialog />
      <Explorer />
    </div>
  );
}
